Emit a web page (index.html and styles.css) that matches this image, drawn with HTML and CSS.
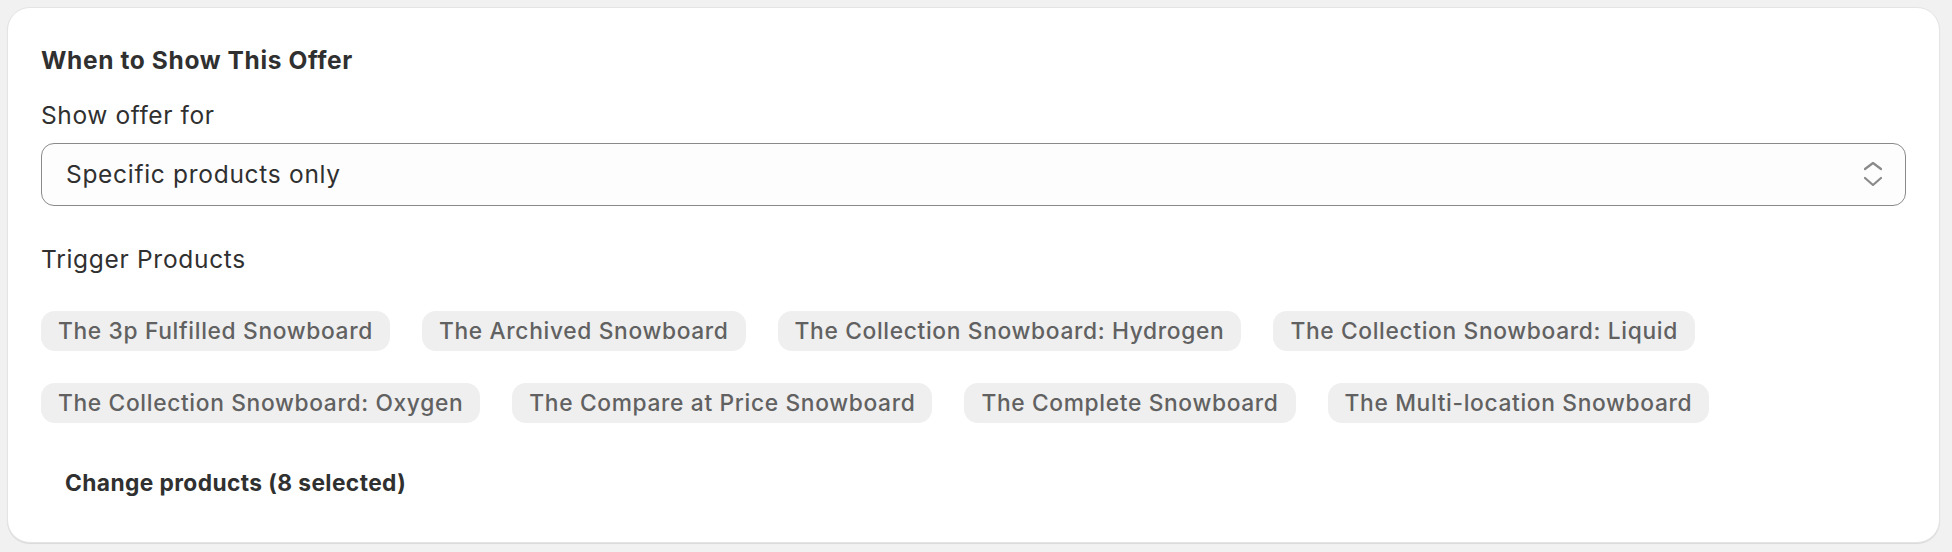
FILE: index.html
```html
<!DOCTYPE html>
<html lang="en">
<head>
<meta charset="utf-8">
<title>When to Show This Offer</title>
<link rel="stylesheet" href="styles.css">
</head>
<body>
<div class="page">
  <section class="card">
    <h2 class="card-title">When to Show This Offer</h2>
    <label class="field-label" for="show-for">Show offer for</label>
    <div class="select">
      <span class="select-value">Specific products only</span>
      <svg class="select-icon" width="18" height="24" viewBox="0 0 18 24" aria-hidden="true">
        <polyline points="1,7 9,1 17,7" fill="none" stroke="#8a8a8a" stroke-width="2.2" stroke-linecap="round" stroke-linejoin="round"/>
        <polyline points="1,16 9,23 17,16" fill="none" stroke="#8a8a8a" stroke-width="2.2" stroke-linecap="round" stroke-linejoin="round"/>
      </svg>
    </div>
    <div class="section-label">Trigger Products</div>
    <div class="tags">
      <span class="tag">The 3p Fulfilled Snowboard</span>
      <span class="tag">The Archived Snowboard</span>
      <span class="tag">The Collection Snowboard: Hydrogen</span>
      <span class="tag">The Collection Snowboard: Liquid</span>
      <span class="tag">The Collection Snowboard: Oxygen</span>
      <span class="tag">The Compare at Price Snowboard</span>
      <span class="tag">The Complete Snowboard</span>
      <span class="tag">The Multi-location Snowboard</span>
    </div>
    <button class="plain-btn" type="button">Change products (8 selected)</button>
  </section>
</div>
</body>
</html>
```

FILE: styles.css
```css
* { box-sizing: border-box; }

html, body {
  margin: 0;
  padding: 0;
  background: #f1f1f1;
}

body {
  font-family: "Inter", "Noto Sans", sans-serif;
  color: #303030;
  font-size: 24.5px;
  line-height: 32px;
  letter-spacing: 0.6px;
}

.page {
  padding: 7px 12px 9px 7px;
}

.card {
  background: #ffffff;
  border: 1px solid #e4e4e4;
  border-radius: 23px;
  box-shadow: 0 1px 1px rgba(0, 0, 0, 0.10);
  padding: 36px 33px 35px 33px;
  display: flex;
  flex-direction: column;
  align-items: flex-start;
}

.card-title {
  margin: 0;
  font-size: 24.5px;
  line-height: 32px;
  font-weight: 650;
  letter-spacing: 0.62px;
  color: #303030;
}

.field-label {
  display: block;
  margin-top: 23px;
  font-size: 24.5px;
  line-height: 32px;
  color: #303030;
}

.select {
  align-self: stretch;
  margin-top: 12px;
  height: 63px;
  border: 1px solid #8a8a8a;
  border-radius: 13px;
  background: #fdfdfd;
  padding: 14px 23px 14px 24px;
  display: flex;
  align-items: flex-start;
  justify-content: space-between;
}

.select-value {
  font-size: 24.5px;
  line-height: 32px;
  letter-spacing: 0.7px;
}

.select-icon {
  margin-top: 4px;
}

.section-label {
  margin-top: 37px;
  font-size: 24.5px;
  line-height: 32px;
  letter-spacing: 0.7px;
}

.tags {
  margin-top: 36px;
  display: flex;
  flex-wrap: wrap;
  gap: 32px;
}

.tag {
  display: inline-block;
  height: 40px;
  padding: 4px 17px;
  border-radius: 14px;
  background: #efefef;
  color: #616161;
  font-size: 22.75px;
  line-height: 32px;
  font-weight: 500;
  letter-spacing: 0.66px;
  white-space: nowrap;
}

.plain-btn {
  margin-top: 36px;
  height: 48px;
  padding: 0 24px;
  border: 0;
  background: transparent;
  font-family: inherit;
  font-size: 22.75px;
  line-height: 32px;
  font-weight: 650;
  letter-spacing: 0.4px;
  color: #303030;
  cursor: pointer;
}
```
